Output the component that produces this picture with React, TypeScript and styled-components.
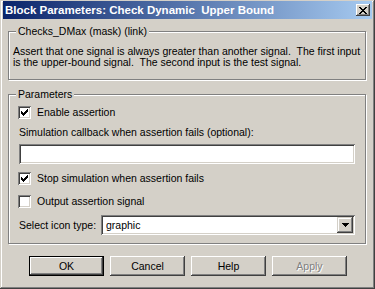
import React from "react";
import styled, { createGlobalStyle } from "styled-components";

const face = "#d4d0c8";

const Global = createGlobalStyle`
  html, body { margin: 0; padding: 0; background: ${face}; }
  body {
    font-family: "Liberation Sans", Arial, sans-serif;
    font-size: 10.5px;
    color: #000;
  }
  * { box-sizing: border-box; }
`;

const Window = styled.div`
  width: 375px;
  height: 289px;
  background: ${face};
  display: flex;
  flex-direction: column;
  padding: 1px 3px 3px 3px;
  box-shadow: inset -1px -1px 0 #404040, inset 1px 1px 0 ${face},
    inset -2px -2px 0 #808080, inset 2px 2px 0 #fff;
`;

const TitleBar = styled.div`
  height: 18px;
  flex: none;
  display: flex;
  align-items: center;
  justify-content: space-between;
  padding: 0 2px 0 2px;
  background: linear-gradient(to right, #0a246a, #a6caf0);
`;

const TitleText = styled.span`
  color: #fff;
  font-weight: bold;
  font-size: 11.5px;
  white-space: pre;
  line-height: 18px;
`;

const CloseButton = styled.div`
  width: 14px;
  height: 12px;
  background: ${face};
  display: flex;
  align-items: center;
  justify-content: center;
  box-shadow: inset -1px -1px 0 #404040, inset 1px 1px 0 #fff,
    inset -2px -2px 0 #808080;
`;

const Content = styled.div`
  display: flex;
  flex-direction: column;
  padding: 0 6px 0 5px;
`;

const GroupBox = styled.div<{ $top: number }>`
  margin-top: ${(p) => p.$top}px;
  border: 1px solid #808080;
  box-shadow: inset 1px 1px 0 #fff, 1px 1px 0 #fff;
  display: flex;
  flex-direction: column;
`;

const Caption = styled.span`
  align-self: flex-start;
  margin: -7px 0 0 7px;
  padding: 0 2px;
  height: 12px;
  line-height: 12px;
  background: ${face};
  white-space: pre;
`;

const Description = styled.p`
  margin: 9px 4px 11px 4px;
  line-height: 11px;
  white-space: pre;
`;

const Params = styled.div`
  display: flex;
  flex-direction: column;
  padding: 0 9px 8px 9px;
`;

const CheckRow = styled.label<{ $top: number }>`
  margin-top: ${(p) => p.$top}px;
  height: 13px;
  display: flex;
  align-items: center;
  gap: 6px;
  line-height: 13px;
`;

const CheckBox = styled.span`
  width: 13px;
  height: 13px;
  flex: none;
  background: #fff;
  display: flex;
  align-items: center;
  justify-content: center;
  box-shadow: inset 1px 1px 0 #808080, inset -1px -1px 0 #fff,
    inset 2px 2px 0 #404040, inset -2px -2px 0 ${face};
`;

const FieldLabel = styled.div<{ $top: number }>`
  margin: ${(p) => p.$top}px 0 0 1px;
  height: 13px;
  line-height: 13px;
`;

const Sunken = styled.div`
  background: #fff;
  box-shadow: inset 1px 1px 0 #808080, inset -1px -1px 0 #fff,
    inset 2px 2px 0 #404040, inset -2px -2px 0 ${face};
`;

const TextInput = styled(Sunken)`
  margin: 5px 1px 0 1px;
  height: 20px;
`;

const SelectRow = styled.div`
  margin-top: 7px;
  height: 20px;
  display: flex;
  align-items: center;
`;

const SelectLabel = styled.span`
  width: 83px;
  flex: none;
  padding-left: 1px;
  line-height: 13px;
`;

const SelectField = styled(Sunken)`
  flex: 1;
  margin-right: 1px;
  height: 20px;
  display: flex;
  align-items: center;
  justify-content: space-between;
  padding: 2px 2px 2px 5px;
`;

const DropButton = styled.div`
  width: 16px;
  height: 16px;
  background: ${face};
  display: flex;
  align-items: center;
  justify-content: center;
  box-shadow: inset -1px -1px 0 #404040, inset 1px 1px 0 ${face},
    inset -2px -2px 0 #808080, inset 2px 2px 0 #fff;
`;

const ButtonRow = styled.div`
  margin-top: 12px;
  padding-left: 21px;
  display: flex;
  gap: 6px;
`;

const Button = styled.div<{ $default?: boolean; $disabled?: boolean }>`
  width: 75px;
  height: 20px;
  display: flex;
  align-items: center;
  justify-content: center;
  background: ${face};
  border: ${(p) => (p.$default ? "1px solid #000" : "none")};
  color: ${(p) => (p.$disabled ? "#808080" : "#000")};
  text-shadow: ${(p) => (p.$disabled ? "1px 1px 0 #fff" : "none")};
  box-shadow: inset -1px -1px 0 #404040, inset 1px 1px 0 #fff,
    inset -2px -2px 0 #808080, inset 2px 2px 0 ${face};
`;

const Check = () => (
  <svg width="7" height="7" viewBox="0 0 7 7" shapeRendering="crispEdges">
    {[2, 3, 4, 3, 2, 1, 0].map((y, x) => (
      <rect key={x} x={x} y={y} width="1" height="3" fill="#000" />
    ))}
  </svg>
);

const CheckItem = ({ top, checked, label }: { top: number; checked: boolean; label: string }) => (
  <CheckRow $top={top}>
    <CheckBox>{checked && <Check />}</CheckBox>
    <span>{label}</span>
  </CheckRow>
);

export default function App() {
  return (
    <>
      <Global />
      <Window>
        <TitleBar>
          <TitleText>{"Block Parameters: Check Dynamic  Upper Bound"}</TitleText>
          <CloseButton>
            <svg width="8" height="7" viewBox="0 0 8 7" shapeRendering="crispEdges">
              <path d="M0 0h2l2 2.5L6 0h2L5 3.5 8 7H6L4 4.5 2 7H0l3-3.5z" fill="#000" />
            </svg>
          </CloseButton>
        </TitleBar>
        <Content>
          <GroupBox $top={12}>
            <Caption>Checks_DMax (mask) (link)</Caption>
            <Description>
              {"Assert that one signal is always greater than another signal.  The first input\nis the upper-bound signal.  The second input is the test signal."}
            </Description>
          </GroupBox>
          <GroupBox $top={14}>
            <Caption>Parameters</Caption>
            <Params>
              <CheckItem top={6} checked label="Enable assertion" />
              <FieldLabel $top={7}>Simulation callback when assertion fails (optional):</FieldLabel>
              <TextInput />
              <CheckItem top={8} checked label="Stop simulation when assertion fails" />
              <CheckItem top={10} checked={false} label="Output assertion signal" />
              <SelectRow>
                <SelectLabel>Select icon type:</SelectLabel>
                <SelectField>
                  <span>graphic</span>
                  <DropButton>
                    <svg width="7" height="4" viewBox="0 0 7 4" shapeRendering="crispEdges">
                      <path d="M0 0h7L3.5 4z" fill="#000" />
                    </svg>
                  </DropButton>
                </SelectField>
              </SelectRow>
            </Params>
          </GroupBox>
          <ButtonRow>
            <Button $default>OK</Button>
            <Button>Cancel</Button>
            <Button>Help</Button>
            <Button $disabled>Apply</Button>
          </ButtonRow>
        </Content>
      </Window>
    </>
  );
}
